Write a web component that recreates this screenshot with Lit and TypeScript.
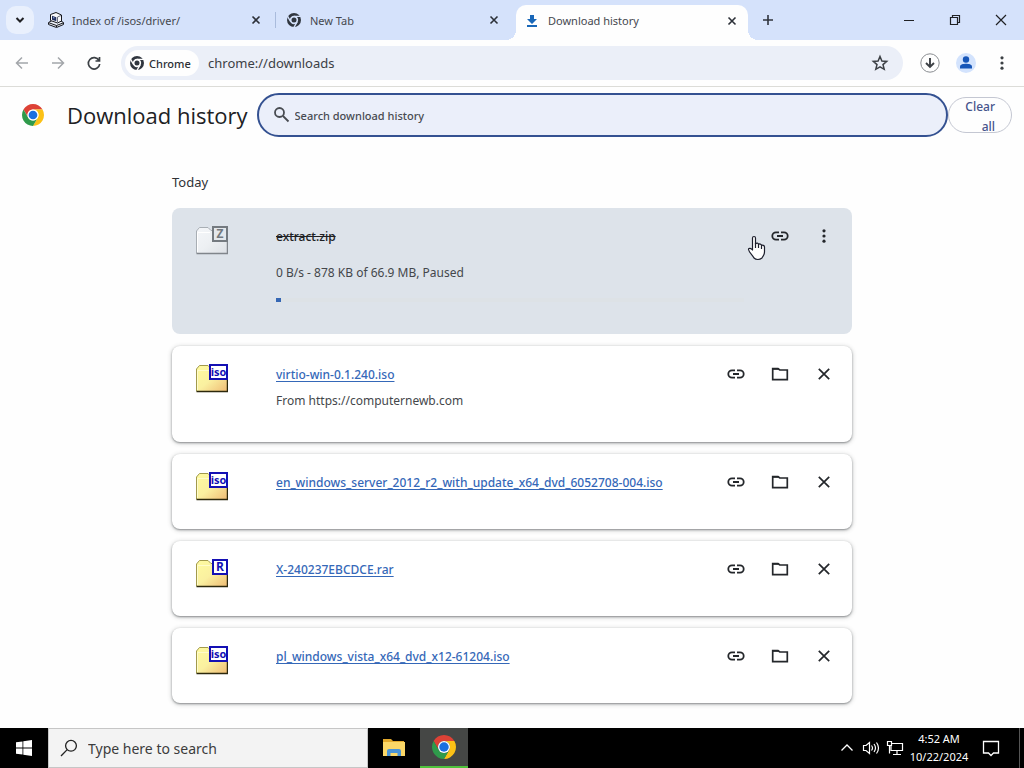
import { LitElement, html, svg, css, nothing } from "lit";
import { customElement, property } from "lit/decorators.js";
import { classMap } from "lit/directives/class-map.js";

const chromeLogo = (size: number) => html`<svg width=${size} height=${size} viewBox="0 0 48 48" aria-hidden="true">
  <path fill="#dd4236" d="M3.22 12A24 24 0 0 1 44.78 12H24A12 12 0 0 0 13.61 30Z"/>
  <path fill="#fbc116" d="M44.78 12A24 24 0 0 1 24 48L34.39 30A12 12 0 0 0 24 12Z"/>
  <path fill="#2f9a4b" d="M24 48A24 24 0 0 1 3.22 12L13.61 30A12 12 0 0 0 34.39 30Z"/>
  <circle cx="24" cy="24" r="12" fill="#fff"/><circle cx="24" cy="24" r="9.5" fill="#1a6fe0"/></svg>`;

const chromeMono = (bg: string) => html`<svg width="16" height="16" viewBox="0 0 48 48" aria-hidden="true">
  <circle cx="24" cy="24" r="21" fill="#30363f"/>
  <path d="M24 13H46M33.5 29.500L22.500 48M14.500 29.500L3.500 11" stroke=${bg} stroke-width="4" fill="none"/>
  <circle cx="24" cy="24" r="10" fill="#30363f" stroke=${bg} stroke-width="5"/></svg>`;

const line = (size: number, width: number, body: unknown, box = 20) => html`<svg width=${size} height=${size}
  viewBox="0 0 ${box} ${box}" fill="none" stroke="currentColor" stroke-width=${width} aria-hidden="true">${body}</svg>`;

const icons = {
  chevron: line(16, 2, svg`<path d="M4.500 6L8 9.500L11.500 6"/>`, 16),
  close: line(12, 1.6, svg`<path d="M2.500 2.500L9.500 9.500M9.500 2.500L2.500 9.500"/>`, 12),
  plus: line(14, 1.6, svg`<path d="M7 2V12M2 7H12"/>`, 14),
  back: line(16, 1.5, svg`<path d="M14 8H3M8 2.500L2.500 8L8 13.500"/>`, 16),
  forward: line(16, 1.5, svg`<path d="M2 8H13M8 2.500L13.500 8L8 13.500"/>`, 16),
  reload: line(16, 1.7, svg`<path d="M13 5.500A5.700 5.700 0 1 0 13.700 9M13.500 2V6H9.500"/>`, 16),
  star: line(18, 1.5, svg`<path d="M9 2.500L10.900 7L15.700 7.400L12 10.600L13.200 15.300L9 12.800L4.800 15.300L6 10.600L2.300 7.400L7.100 7Z"/>`, 18),
  download: line(20, 1, svg`<circle cx="10" cy="10" r="9.200" stroke="#8a8d91"/><path stroke-width="1.900" d="M10 5V14M6 10L10 14L14 10"/>`),
  dots: html`<svg width="20" height="20" viewBox="0 0 20 20" fill="currentColor" aria-hidden="true"><circle cx="10" cy="4.800" r="1.600"/><circle cx="10" cy="10" r="1.600"/><circle cx="10" cy="15.200" r="1.600"/></svg>`,
  link: line(20, 1.8, svg`<path d="M9 6.300H6A3.700 3.700 0 0 0 6 13.700H9M11 6.300H14A3.700 3.700 0 0 1 14 13.700H11M7 10H13"/>`),
  folder: line(20, 1.7, svg`<path d="M2.700 4.500H8L9.800 6H17.300V15.700H2.700Z"/><path d="M2.700 5H8.500"/>`),
  cross: line(20, 1.7, svg`<path d="M4.800 4.800L15.200 15.200M15.200 4.800L4.800 15.200"/>`),
  search: line(18, 1.8, svg`<circle cx="6.500" cy="6.500" r="4.500"/><path d="M10 10L15.500 15.500"/>`, 18),
  min: line(12, 1, svg`<path d="M1 6.500H11"/>`, 12),
  restore: line(12, 1.2, svg`<path d="M1.500 3.500H8.500V10.500H1.500ZM3.500 3.500V1.500H10.500V8.500H8.500"/>`, 12),
  winClose: line(12, 1.2, svg`<path d="M1 1L11 11M11 1L1 11"/>`, 12),
};

const computer = html`<svg width="16" height="16" viewBox="0 0 16 16" aria-hidden="true">
  <path fill="#eef1f8" stroke="#14161c" d="M.500 10.500L4 8.500H12L15.500 10.500V12.500L8.500 15.500L.500 12.500Z"/>
  <path fill="none" stroke="#14161c" d="M1 10.800L8.500 13.500L15 11M8.500 13.500V15"/>
  <path fill="#f8f9fc" stroke="#14161c" d="M2.500 2.500L8 .500L13.500 3V9L9.500 11L2.500 8.500Z"/>
  <path fill="#22305e" d="M4 3.800L8.300 5.200V9.200L4 7.800Z"/><path fill="#8ea4dc" d="M5 5L6.500 5.400V6.600L5 6.200Z"/>
  <path stroke="#6b7080" fill="none" d="M9.500 5V10.500M9.500 5L13 3.500"/></svg>`;

const archiveIcon = (label: string) => {
  const off = label === "Z";
  const wide = label === "iso";
  const edge = off ? "#747a80" : "#1410b4";
  const x = wide ? 13 : 16;
  return html`<svg width="32" height="32" viewBox="0 0 32 32" role="img" aria-label="${label} archive">
    <defs><linearGradient id="fill" x1="0" y1="0" x2="1" y2="1">
      <stop offset="0" stop-color=${off ? "#f4f6f9" : "#fffba0"}/><stop offset=".5" stop-color=${off ? "#edf0f3" : "#faf0a0"}/>
      <stop offset="1" stop-color=${off ? "#dce0e5" : "#efbb74"}/></linearGradient></defs>
    <path fill="url(#fill)" stroke=${off ? "#a8aeb4" : "#a29a4c"} d="M.500 29V7L3.500 3.500H12L15 6.500H31.500V29.500H1Z"/>
    <path fill="none" stroke=${off ? "#fff" : "#fffccb"} d="M1.500 28V8.500H14"/>
    <path fill="none" stroke=${off ? "#80858b" : "#2c280c"} stroke-width="1.500" d="M.500 29.500H31.500V17"/>
    <rect x=${x + 1} y="3" width=${30 - x} height="14" fill=${off ? "#e4e8ec" : "#fff"} stroke=${edge} stroke-width="2"/>
    <text x=${(x + 32) / 2} y="14" text-anchor="middle" font-family="Open Sans, sans-serif" font-weight="700"
      font-size=${wide ? 11 : 12} fill=${edge}>${label}</text></svg>`;
};

@customElement("browser-tab")
class BrowserTab extends LitElement {
  @property() label = "";
  @property({ attribute: false }) icon: unknown;
  static styles = css`
    :host { display: flex; align-items: center; padding: 0 11px 0 8px; color: #45484e; font-size: 12px; box-sizing: border-box; min-width: 0; }
    .icon { display: flex; width: 24px; height: 18px; align-items: center; }
    .label { flex: 1; white-space: nowrap; overflow: hidden; }
    button { border: 0; background: none; padding: 0; display: flex; width: 16px; height: 16px; align-items: center; justify-content: center; color: #2c3038; }
  `;
  render() {
    return html`<span class="icon">${this.icon}</span><span class="label">${this.label}</span>
      <button aria-label="Close ${this.label}">${icons.close}</button>`;
  }
}

interface Download { name: string; kind: string; from?: string; status?: string; progress?: number; }

@customElement("download-item")
class DownloadItem extends LitElement {
  @property({ attribute: false }) item!: Download;
  static styles = css`
    :host { display: block; }
    .card { display: flex; box-sizing: border-box; min-height: 75px; padding: 16px 12px 31px 24px; border-radius: 8px; background: #fff;
      box-shadow: 0 1px 2px rgba(60, 64, 67, 0.5), 0 1px 4px 1px rgba(60, 64, 67, 0.2); }
    .paused { background: #dde3ea; box-shadow: none; padding-bottom: 32px; }
    .icon { width: 80px; height: 24px; flex: none; }
    .main { flex: 1; min-width: 0; padding-top: 1px; }
    .name { font-size: 12px; font-weight: 500; line-height: 24px; white-space: nowrap; }
    a { color: #3568b8; text-decoration: underline; text-decoration-skip-ink: none; text-underline-offset: 2px; }
    .struck { text-decoration: line-through; color: #202124; }
    .info { font-size: 12px; line-height: 20px; color: #44474b; margin-top: 4px; white-space: nowrap; }
    .paused .info { margin-top: 14px; }
    .track { height: 4px; margin: 15px 20px 0 0; background: #dde2e6; }
    .bar { height: 4px; background: #3567b4; }
    .actions { display: flex; gap: 12px; height: 24px; align-items: center; flex: none; }
    button { width: 32px; height: 24px; padding: 0; border: 0; background: none; color: #24272b; display: flex; align-items: center; justify-content: center; }
  `;
  render() {
    const d = this.item;
    const paused = d.progress !== undefined;
    return html`<article class=${classMap({ card: true, paused })}>
      <div class="icon">${archiveIcon(d.kind)}</div>
      <div class="main">
        <div class="name">${paused ? html`<span class="struck">${d.name}</span>` : html`<a href="#">${d.name}</a>`}</div>
        ${d.from ? html`<div class="info">From ${d.from}</div>` : nothing}
        ${paused ? html`<div class="info">${d.status}</div>
          <div class="track" role="progressbar" aria-valuenow=${d.progress!} aria-label="Download progress"><div class="bar" style="width:${d.progress}%"></div></div>` : nothing}
      </div>
      <div class="actions">
        <button aria-label="Copy download link">${icons.link}</button>
        ${paused ? html`<button aria-label="More actions">${icons.dots}</button>`
          : html`<button aria-label="Show in folder">${icons.folder}</button><button aria-label="Remove from list">${icons.cross}</button>`}
      </div></article>`;
  }
}

@customElement("app-root")
class AppRoot extends LitElement {
  private items: Download[] = [
    { name: "extract.zip", kind: "Z", status: "0 B/s - 878 KB of 66.9 MB, Paused", progress: 1 },
    { name: "virtio-win-0.1.240.iso", kind: "iso", from: "https://computernewb.com" },
    { name: "en_windows_server_2012_r2_with_update_x64_dvd_6052708-004.iso", kind: "iso" },
    { name: "X-240237EBCDCE.rar", kind: "R" },
    { name: "pl_windows_vista_x64_dvd_x12-61204.iso", kind: "iso" },
  ];
  static styles = css`
    :host { display: flex; flex-direction: column; height: 100vh; overflow: hidden; position: relative; background: #fefefe; color: #202124; font-family: "Noto Sans", "Open Sans", sans-serif; }
    button { font: inherit; border: 0; padding: 0; background: none; color: inherit; display: flex; align-items: center; justify-content: center; }
    input { font: inherit; border: 0; padding: 0; background: none; color: inherit; outline: 0; min-width: 0; flex: 1; }
    .tabs { display: flex; height: 40px; background: #d5e2fb; padding-left: 6px; flex: none; }
    .menu { width: 28px; height: 28px; margin: 6px 6px 0 0; border-radius: 10px; background: #e9f0fd; }
    browser-tab { width: 235px; flex: 0 1 235px; height: 40px; font-size: 11px; }
    .sep { width: 1px; height: 16px; background: #a9bbdc; margin: 12px 2px 0 0; }
    .active { background: #fefefe; height: 35px; margin: 5px 0 0 3px; padding: 0 8px 4px 8px; border-radius: 10px 10px 0 0; position: relative; flex: 0 1 232px; }
    .active::before, .active::after { content: ""; position: absolute; bottom: 0; width: 10px; height: 10px; }
    .active::before { left: -10px; background: radial-gradient(circle at 0 0, transparent 10px, #fefefe 10px); }
    .active::after { right: -10px; background: radial-gradient(circle at 100% 0, transparent 10px, #fefefe 10px); }
    .new { width: 28px; height: 40px; margin-left: 6px; color: #30343c; }
    .window { display: flex; margin-left: auto; }
    .window button { width: 46px; height: 40px; }
    .toolbar { display: flex; align-items: center; height: 46px; border-bottom: 1px solid #dcdcd8; background: #fefefe; padding: 0 4px; flex: none; color: #3c4045; }
    .toolbar button { width: 36px; height: 36px; flex: none; }
    .toolbar .dim { color: #a3a6aa; }
    .address { flex: 1; display: flex; align-items: center; box-sizing: border-box; height: 34px; margin: 0 9px; padding: 0 5px 0 4px; border-radius: 17px; background: #ebeff8; font-size: 13px; min-width: 0; }
    .toolbar .chip { width: 74px; height: 26px; margin-right: 9px; padding-left: 4px; justify-content: flex-start; border-radius: 13px; background: #fefefe; font-size: 11px; font-weight: 500; gap: 4px; color: #2c2f34; }
    .page { flex: 1; min-height: 0; overflow: hidden; }
    .head { display: flex; align-items: center; height: 56px; padding: 0 12px 0 22px; }
    h1 { margin: 0 9px 0 23px; font-family: "Open Sans", "Noto Sans", sans-serif; font-size: 22px; font-weight: 500; line-height: 32px; white-space: nowrap; }
    .search { flex: 1; display: flex; align-items: center; box-sizing: border-box; height: 44px; border: 2px solid #345191; border-radius: 22px; background: #ebeffa; padding: 0 14px; gap: 4px; font-size: 11px; font-weight: 500; color: #484b51; }
    .search input::placeholder { color: #484b51; opacity: 1; }
    .clear { width: 64px; height: 36px; box-sizing: border-box; border: 1px solid #c4c7d2; border-radius: 18px; padding: 3px 16px 0 0; justify-content: flex-end; text-align: right; font-size: 12px; font-weight: 500; line-height: 20px; color: #46548c; }
    main { width: 680px; max-width: 100%; margin: 0 auto; }
    h2 { margin: 29px 0 16px; font-size: 13px; font-weight: 400; line-height: 20px; color: #303236; }
    .list { display: flex; flex-direction: column; gap: 12px; }
    .hand { position: absolute; left: 747px; top: 235px; }
    .taskbar { display: flex; align-items: center; height: 40px; background: #000; color: #fff; flex: none; }
    .start { width: 48px; height: 40px; }
    .find { display: flex; align-items: center; box-sizing: border-box; width: 320px; height: 40px; border: 1px solid #c6c6c6; background: #f3f3f3; color: #3c3c3c; padding: 0 11px; gap: 10px; font-size: 14px; }
    .find input::placeholder { color: #3c3c3c; opacity: 1; }
    .task { width: 52px; height: 40px; }
    .running { box-sizing: border-box; width: 48px; height: 40px; background: #454745; border-bottom: 2px solid #4fc23c; }
    .tray { display: flex; align-items: center; margin-left: auto; height: 40px; }
    .tray button { width: 24px; height: 40px; }
    .clock { width: 64px; font-size: 11px; line-height: 18px; text-align: center; white-space: nowrap; display: flex; flex-direction: column; align-items: center; }
    .tray .note { width: 40px; margin-right: 8px; }
    .peek { width: 4px; height: 40px; border-left: 1px solid #555; }
  `;
  render() {
    return html`
      <nav class="tabs" aria-label="Tabs">
        <button class="menu" aria-label="Search tabs">${icons.chevron}</button>
        <browser-tab label="Index of /isos/driver/" .icon=${computer}></browser-tab>
        <span class="sep"></span>
        <browser-tab label="New Tab" .icon=${chromeMono("#d5e2fb")}></browser-tab>
        <browser-tab class="active" label="Download history" .icon=${html`<svg width="16" height="16" viewBox="0 0 16 16" fill="#1967b8"><path d="M6 2H10V6H13L8 11L3 6H6ZM3 12H13V14H3Z"/></svg>`}></browser-tab>
        <button class="new" aria-label="New tab">${icons.plus}</button>
        <div class="window"><button aria-label="Minimize">${icons.min}</button><button aria-label="Restore">${icons.restore}</button><button aria-label="Close window">${icons.winClose}</button></div>
      </nav>
      <div class="toolbar">
        <button class="dim" aria-label="Back">${icons.back}</button><button class="dim" aria-label="Forward">${icons.forward}</button><button aria-label="Reload">${icons.reload}</button>
        <div class="address"><button class="chip">${chromeMono("#fefefe")}Chrome</button>
          <input aria-label="Address" .value=${"chrome://downloads"} /><button aria-label="Bookmark this page">${icons.star}</button></div>
        <button aria-label="Downloads">${icons.download}</button>
        <button aria-label="Profile"><svg width="20" height="20" viewBox="0 0 20 20" fill="#1756b8"><circle cx="10" cy="10" r="10" fill="#d3e3fd"/><circle cx="10" cy="6.500" r="3.200"/><path d="M4 15.500V13.600C4 11.500 7.500 10.800 10 10.800S16 11.500 16 13.600V15.500Z"/></svg></button>
        <button aria-label="Menu">${icons.dots}</button>
      </div>
      <section class="page">
        <header class="head">${chromeLogo(22)}<h1>Download history</h1>
          <label class="search">${icons.search}<input type="search" aria-label="Search download history" placeholder="Search download history" /></label>
          <button class="clear">Clear<br />all</button></header>
        <main><h2>Today</h2><div class="list">${this.items.map((i) => html`<download-item .item=${i}></download-item>`)}</div></main>
      </section>
      <svg class="hand" width="20" height="26" viewBox="0 0 20 26" fill="#fff" stroke="#1c1e2c" stroke-width="1.200" stroke-linejoin="round" aria-hidden="true"><path d="M5.500 15V3C5.500 1 8.500 1 8.500 3V9C9.500 7.500 11.500 8 11.500 9.500C12.500 8.500 14.300 9 14.500 10.500C15.500 9.800 17.500 10.300 17.500 12V17C17.500 20 16 21 15 23C12.500 25 9 25 7 23C6 20.500 2 17.500 1.500 14.500C1.500 12.500 4.500 13.500 5.500 15Z"/><path d="M8.500 8V13M11.500 9.500V13M14.500 10.500V14"/></svg>
      <footer class="taskbar">
        <button class="start" aria-label="Start"><svg width="16" height="16" viewBox="0 0 16 16" fill="#fff"><path d="M0 2.300L6.500 1.400V7.600H0ZM7.300 1.300L16 0V7.600H7.300ZM0 8.400H6.500V14.600L0 13.700ZM7.300 8.400H16V16L7.300 14.700Z"/></svg></button>
        <label class="find"><svg width="18" height="18" viewBox="0 0 18 18" fill="none" stroke="#222" stroke-width="1.300"><circle cx="11" cy="6.800" r="5.400"/><path d="M7.200 10.600L1 17"/></svg><input aria-label="Type here to search" placeholder="Type here to search" /></label>
        <button class="task" aria-label="File Explorer"><svg width="22" height="18" viewBox="0 0 22 18"><path fill="#e2a92c" d="M0 0H8L10 2H21V8H0Z"/><path fill="#fbd767" d="M0 3H22V17H0Z"/><path fill="#4a94d6" d="M4 17V12Q4 10 6 10H16Q18 10 18 12V17H14.500V14H7.500V17Z"/></svg></button>
        <button class="running" aria-label="Google Chrome">${chromeLogo(24)}</button>
        <div class="tray">
          <button aria-label="Show hidden icons"><svg width="14" height="14" viewBox="0 0 14 14" fill="none" stroke="#fff" stroke-width="1.300"><path d="M1.500 9.500L7 4L12.500 9.500"/></svg></button>
          <button aria-label="Volume"><svg width="18" height="16" viewBox="0 0 18 16" fill="none" stroke="#fff" stroke-width="1.200"><path d="M1.500 5.500H4L7.500 2.500V13.500L4 10.500H1.500ZM9.500 5.500Q11.500 8 9.500 10.500M12 4Q15 8 12 12M14.500 2.500Q18.500 8 14.500 13.500"/></svg></button>
          <button aria-label="Network"><svg width="18" height="16" viewBox="0 0 18 16" fill="none" stroke="#fff" stroke-width="1.200"><path d="M6 3.500H16.500V10.500H5V6M11 10.500V14M7 14.500H15M1.500 1.500H5.500V5.500H1.500ZM3.500 5.500V13.500"/></svg></button>
          <time class="clock"><span>4:52 AM</span><span>10/22/2024</span></time>
          <button class="note" aria-label="Notifications"><svg width="18" height="18" viewBox="0 0 18 18" fill="none" stroke="#fff" stroke-width="1.300"><path d="M1.500 2.500H16.500V14H11.500L9 16.500L6.500 14H1.500Z"/></svg></button>
          <span class="peek"></span>
        </div>
      </footer>`;
  }
}
